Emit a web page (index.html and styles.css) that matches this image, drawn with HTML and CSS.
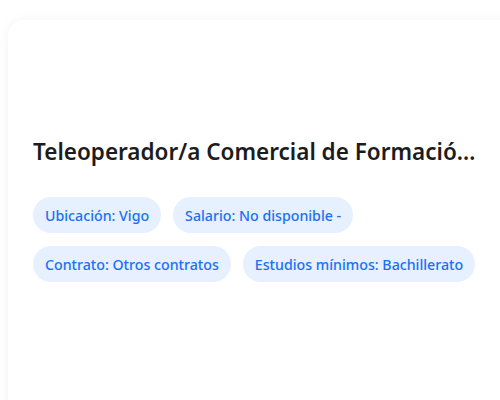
FILE: index.html
```
<!DOCTYPE html>
<html lang="es">
<head>
<meta charset="utf-8">
<link rel="stylesheet" href="styles.css">
</head>
<body>
<div class="card">
  <h2 class="title">Teleoperador/a Comercial de Formación Online y Cursos Subvencionados</h2>
  <div class="tags">
    <span class="tag">Ubicación: Vigo</span>
    <span class="tag">Salario: No disponible -</span>
    <span class="tag">Contrato: Otros contratos</span>
    <span class="tag">Estudios mínimos: Bachillerato</span>
  </div>
</div>
</body>
</html>
```
FILE: styles.css
```
html, body {
  margin: 0;
  padding: 0;
  background: #ffffff;
}
body {
  font-family: "Noto Sans", "Open Sans", sans-serif;
  padding: 20px 0 0 8px;
  overflow: hidden;
  height: 400px;
  box-sizing: border-box;
}
.card {
  background: #ffffff;
  border-radius: 16px;
  box-shadow: 0 0 12px rgba(0, 0, 0, 0.05);
  padding: 117px 24px 100px 25px;
  margin-right: -40px;
  min-height: 400px;
}
.title {
  margin: 0 0 30px 0;
  max-width: 443px;
  font-size: 22.5px;
  font-weight: 600;
  line-height: 30px;
  color: #1c1c1e;
  white-space: nowrap;
  overflow: hidden;
  text-overflow: ellipsis;
}
.tags {
  display: flex;
  flex-wrap: wrap;
  gap: 13px 12px;
  max-width: 470px;
}
.tag {
  display: inline-flex;
  align-items: center;
  height: 36px;
  padding: 0 12px;
  border-radius: 18px;
  background: #e6f0ff;
  color: #1a6ff5;
  font-size: 14.2px;
  font-weight: 500;
}
```
